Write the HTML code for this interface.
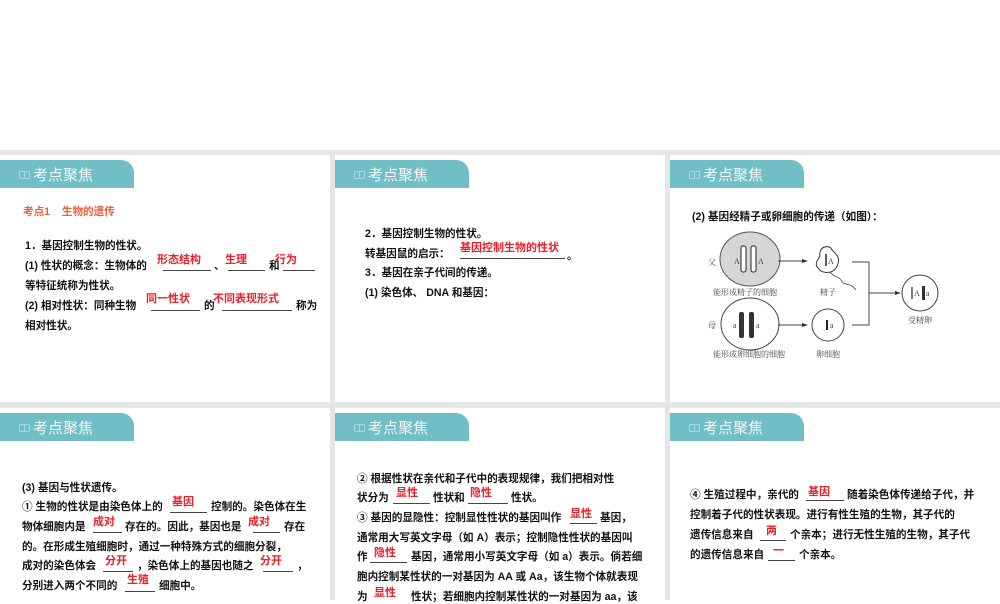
<!DOCTYPE html>
<html><head><meta charset="utf-8"><style>
*{margin:0;padding:0;box-sizing:border-box}
body{width:1000px;height:600px;background:#fff;position:relative;overflow:hidden;font-family:"Liberation Sans","Noto Sans CJK SC",sans-serif}
.bg{position:absolute;left:0;top:150px;width:1000px;height:450px;background:#e6e6e6}
.p{position:absolute;background:#fff}
.tab{position:absolute;height:28px;width:134px;background:#72bec6;border-top-right-radius:13px}
.tab span{position:absolute;left:33px;top:4px;font-size:15px;color:#f4f8f8;letter-spacing:0px}
.tab i{position:absolute;left:19px;top:11px;width:11px;height:8px;border:1px solid #a8d8dc;border-radius:1px}
.tab i:after{content:"";position:absolute;left:4px;top:0;width:1px;height:6px;background:#a8d8dc}
.t{position:absolute;font-size:10.6px;line-height:14px;white-space:nowrap;color:#111;font-weight:bold}
.r{position:absolute;font-size:11px;line-height:14px;white-space:nowrap;color:#e8202a;font-weight:bold}
.u{position:absolute;height:1px;background:#444}
</style></head><body>
<div class="bg"></div>
<div class="p" style="left:0;top:155px;width:330px;height:247px"></div>
<div class="p" style="left:335px;top:155px;width:330px;height:247px"></div>
<div class="p" style="left:670px;top:155px;width:330px;height:247px"></div>
<div class="p" style="left:0;top:408px;width:330px;height:192px"></div>
<div class="p" style="left:335px;top:408px;width:330px;height:192px"></div>
<div class="p" style="left:670px;top:408px;width:330px;height:192px"></div>

<div class="tab" style="left:0;top:160px"><i></i><span>考点聚焦</span></div>
<div class="tab" style="left:335px;top:160px"><i></i><span>考点聚焦</span></div>
<div class="tab" style="left:670px;top:160px"><i></i><span>考点聚焦</span></div>
<div class="tab" style="left:0;top:413px"><i></i><span>考点聚焦</span></div>
<div class="tab" style="left:335px;top:413px"><i></i><span>考点聚焦</span></div>
<div class="tab" style="left:670px;top:413px"><i></i><span>考点聚焦</span></div>

<!-- Panel 1 -->
<div class="t" style="left:23px;top:205px;color:#e8603c">考点1&nbsp;&nbsp;&nbsp;&nbsp;生物的遗传</div>
<div class="t" style="left:25px;top:239px">1．基因控制生物的性状。</div>
<div class="t" style="left:25px;top:259px">(1) 性状的概念：生物体的</div>
<div class="u" style="left:163px;top:270px;width:48px"></div><div class="r" style="left:157px;top:253px">形态结构</div>
<div class="t" style="left:214px;top:259px">、</div>
<div class="u" style="left:228px;top:270px;width:37px"></div><div class="r" style="left:225px;top:253px">生理</div>
<div class="t" style="left:269px;top:259px">和</div>
<div class="u" style="left:283px;top:270px;width:32px"></div><div class="r" style="left:275px;top:253px">行为</div>
<div class="t" style="left:25px;top:279px">等特征统称为性状。</div>
<div class="t" style="left:25px;top:299px">(2) 相对性状：同种生物</div>
<div class="u" style="left:151px;top:310px;width:49px"></div><div class="r" style="left:146px;top:292px">同一性状</div>
<div class="t" style="left:204px;top:299px">的</div>
<div class="u" style="left:222px;top:310px;width:70px"></div><div class="r" style="left:213px;top:292px">不同表现形式</div>
<div class="t" style="left:296px;top:299px">称为</div>
<div class="t" style="left:25px;top:319px">相对性状。</div>

<!-- Panel 2 -->
<div class="t" style="left:365px;top:227px">2．基因控制生物的性状。</div>
<div class="t" style="left:365px;top:247px">转基因鼠的启示：</div>
<div class="u" style="left:460px;top:258px;width:105px"></div><div class="r" style="left:460px;top:241px">基因控制生物的性状</div>
<div class="t" style="left:567px;top:249px">。</div>
<div class="t" style="left:365px;top:266px">3．基因在亲子代间的传递。</div>
<div class="t" style="left:365px;top:286px">(1) 染色体、 DNA 和基因：</div>

<!-- Panel 3 -->
<div class="t" style="left:692px;top:210px">(2) 基因经精子或卵细胞的传递（如图）：</div>
<svg style="position:absolute;left:670px;top:200px" width="330" height="170" viewBox="670 200 330 170" font-family="Liberation Serif,Noto Serif CJK SC,serif" font-size="8" fill="#444">
<text x="708" y="265">父</text>
<ellipse cx="750" cy="259" rx="30" ry="27" fill="#d6d6d6" stroke="#555"/>
<rect x="741" y="246" width="5" height="26" rx="2" fill="#fff" stroke="#222"/>
<rect x="751" y="246" width="5" height="26" rx="2" fill="#fff" stroke="#222"/>
<text x="734" y="264">A</text><text x="758" y="264">A</text>
<line x1="778" y1="261" x2="806" y2="261" stroke="#444"/><polygon points="808,261 802,259 802,263" fill="#333"/>
<path d="M820,256 C818,246 830,244 832,250 C836,254 842,258 836,268 C832,274 822,274 818,268 C814,264 818,260 820,256Z" fill="none" stroke="#333"/>
<line x1="826" y1="254" x2="826" y2="266" stroke="#222" stroke-width="1.5"/><text x="828" y="264">A</text>
<path d="M830,272 C834,278 840,276 842,282 C846,286 850,282 856,290" fill="none" stroke="#333" stroke-width="0.7"/>
<text x="713" y="295">能形成精子的细胞</text><text x="820" y="295">精子</text>
<text x="708" y="328">母</text>
<ellipse cx="750" cy="324" rx="29" ry="26" fill="#fff" stroke="#444"/>
<rect x="739" y="312" width="5" height="26" rx="2" fill="#333"/>
<rect x="749" y="312" width="5" height="26" rx="2" fill="#333"/>
<text x="733" y="328">a</text><text x="756" y="328">a</text>
<line x1="778" y1="325" x2="806" y2="325" stroke="#444"/><polygon points="808,325 802,323 802,327" fill="#333"/>
<circle cx="828" cy="325" r="16" fill="#fff" stroke="#444"/>
<rect x="826" y="320" width="2" height="10" fill="#222"/><text x="830" y="328">a</text>
<text x="713" y="357">能形成卵细胞的细胞</text><text x="816" y="357">卵细胞</text>
<polyline points="852,262 869,262 869,325 852,325" fill="none" stroke="#444"/>
<line x1="869" y1="293" x2="898" y2="293" stroke="#444"/><polygon points="901,293 895,291 895,295" fill="#333"/>
<circle cx="920" cy="293" r="18" fill="#fff" stroke="#444"/>
<line x1="912" y1="287" x2="912" y2="299" stroke="#222" stroke-width="1.2"/><text x="914" y="296">A</text>
<rect x="922" y="286" width="3" height="14" fill="#333"/><text x="926" y="296">a</text>
<text x="908" y="323">受精卵</text>
</svg>

<!-- Panel 4 -->
<div class="t" style="left:22px;top:481px">(3) 基因与性状遗传。</div>
<div class="t" style="left:22px;top:500px">① 生物的性状是由染色体上的</div>
<div class="u" style="left:170px;top:512px;width:37px"></div><div class="r" style="left:172px;top:495px">基因</div>
<div class="t" style="left:211px;top:500px">控制的。染色体在生</div>
<div class="t" style="left:22px;top:520px">物体细胞内是</div>
<div class="u" style="left:93px;top:532px;width:29px"></div><div class="r" style="left:93px;top:515px">成对</div>
<div class="t" style="left:125px;top:520px">存在的。因此，基因也是</div>
<div class="u" style="left:253px;top:532px;width:27px"></div><div class="r" style="left:248px;top:515px">成对</div>
<div class="t" style="left:284px;top:520px">存在</div>
<div class="t" style="left:22px;top:540px">的。在形成生殖细胞时，通过一种特殊方式的细胞分裂，</div>
<div class="t" style="left:22px;top:559px">成对的染色体会</div>
<div class="u" style="left:103px;top:571px;width:30px"></div><div class="r" style="left:105px;top:554px">分开</div>
<div class="t" style="left:137px;top:559px">，染色体上的基因也随之</div>
<div class="u" style="left:263px;top:571px;width:30px"></div><div class="r" style="left:260px;top:554px">分开</div>
<div class="t" style="left:297px;top:559px">，</div>
<div class="t" style="left:22px;top:579px">分别进入两个不同的</div>
<div class="u" style="left:125px;top:591px;width:30px"></div><div class="r" style="left:127px;top:573px">生殖</div>
<div class="t" style="left:159px;top:579px">细胞中。</div>

<!-- Panel 5 -->
<div class="t" style="left:357px;top:472px">② 根据性状在亲代和子代中的表现规律，我们把相对性</div>
<div class="t" style="left:357px;top:491px">状分为</div>
<div class="u" style="left:393px;top:503px;width:37px"></div><div class="r" style="left:396px;top:486px">显性</div>
<div class="t" style="left:433px;top:491px">性状和</div>
<div class="u" style="left:468px;top:503px;width:40px"></div><div class="r" style="left:470px;top:486px">隐性</div>
<div class="t" style="left:511px;top:491px">性状。</div>
<div class="t" style="left:357px;top:511px">③ 基因的显隐性：控制显性性状的基因叫作</div>
<div class="u" style="left:570px;top:523px;width:27px"></div><div class="r" style="left:570px;top:507px">显性</div>
<div class="t" style="left:600px;top:511px">基因，</div>
<div class="t" style="left:357px;top:531px">通常用大写英文字母（如 A）表示；控制隐性性状的基因叫</div>
<div class="t" style="left:357px;top:550px">作</div>
<div class="u" style="left:370px;top:562px;width:37px"></div><div class="r" style="left:374px;top:546px">隐性</div>
<div class="t" style="left:411px;top:550px">基因，通常用小写英文字母（如 a）表示。倘若细</div>
<div class="t" style="left:357px;top:570px">胞内控制某性状的一对基因为 AA 或 Aa，该生物个体就表现</div>
<div class="t" style="left:357px;top:590px">为</div>
<div class="r" style="left:374px;top:586px">显性</div>
<div class="t" style="left:411px;top:590px">性状；若细胞内控制某性状的一对基因为 aa，该</div>

<!-- Panel 6 -->
<div class="t" style="left:690px;top:488px">④ 生殖过程中，亲代的</div>
<div class="u" style="left:806px;top:500px;width:38px"></div><div class="r" style="left:808px;top:485px">基因</div>
<div class="t" style="left:847px;top:488px">随着染色体传递给子代，并</div>
<div class="t" style="left:690px;top:508px">控制着子代的性状表现。进行有性生殖的生物，其子代的</div>
<div class="t" style="left:690px;top:528px">遗传信息来自</div>
<div class="u" style="left:760px;top:540px;width:26px"></div><div class="r" style="left:766px;top:524px">两</div>
<div class="t" style="left:790px;top:528px">个亲本；进行无性生殖的生物，其子代</div>
<div class="t" style="left:690px;top:548px">的遗传信息来自</div>
<div class="u" style="left:768px;top:560px;width:27px"></div><div class="r" style="left:773px;top:544px">一</div>
<div class="t" style="left:799px;top:548px">个亲本。</div>
</body></html>
